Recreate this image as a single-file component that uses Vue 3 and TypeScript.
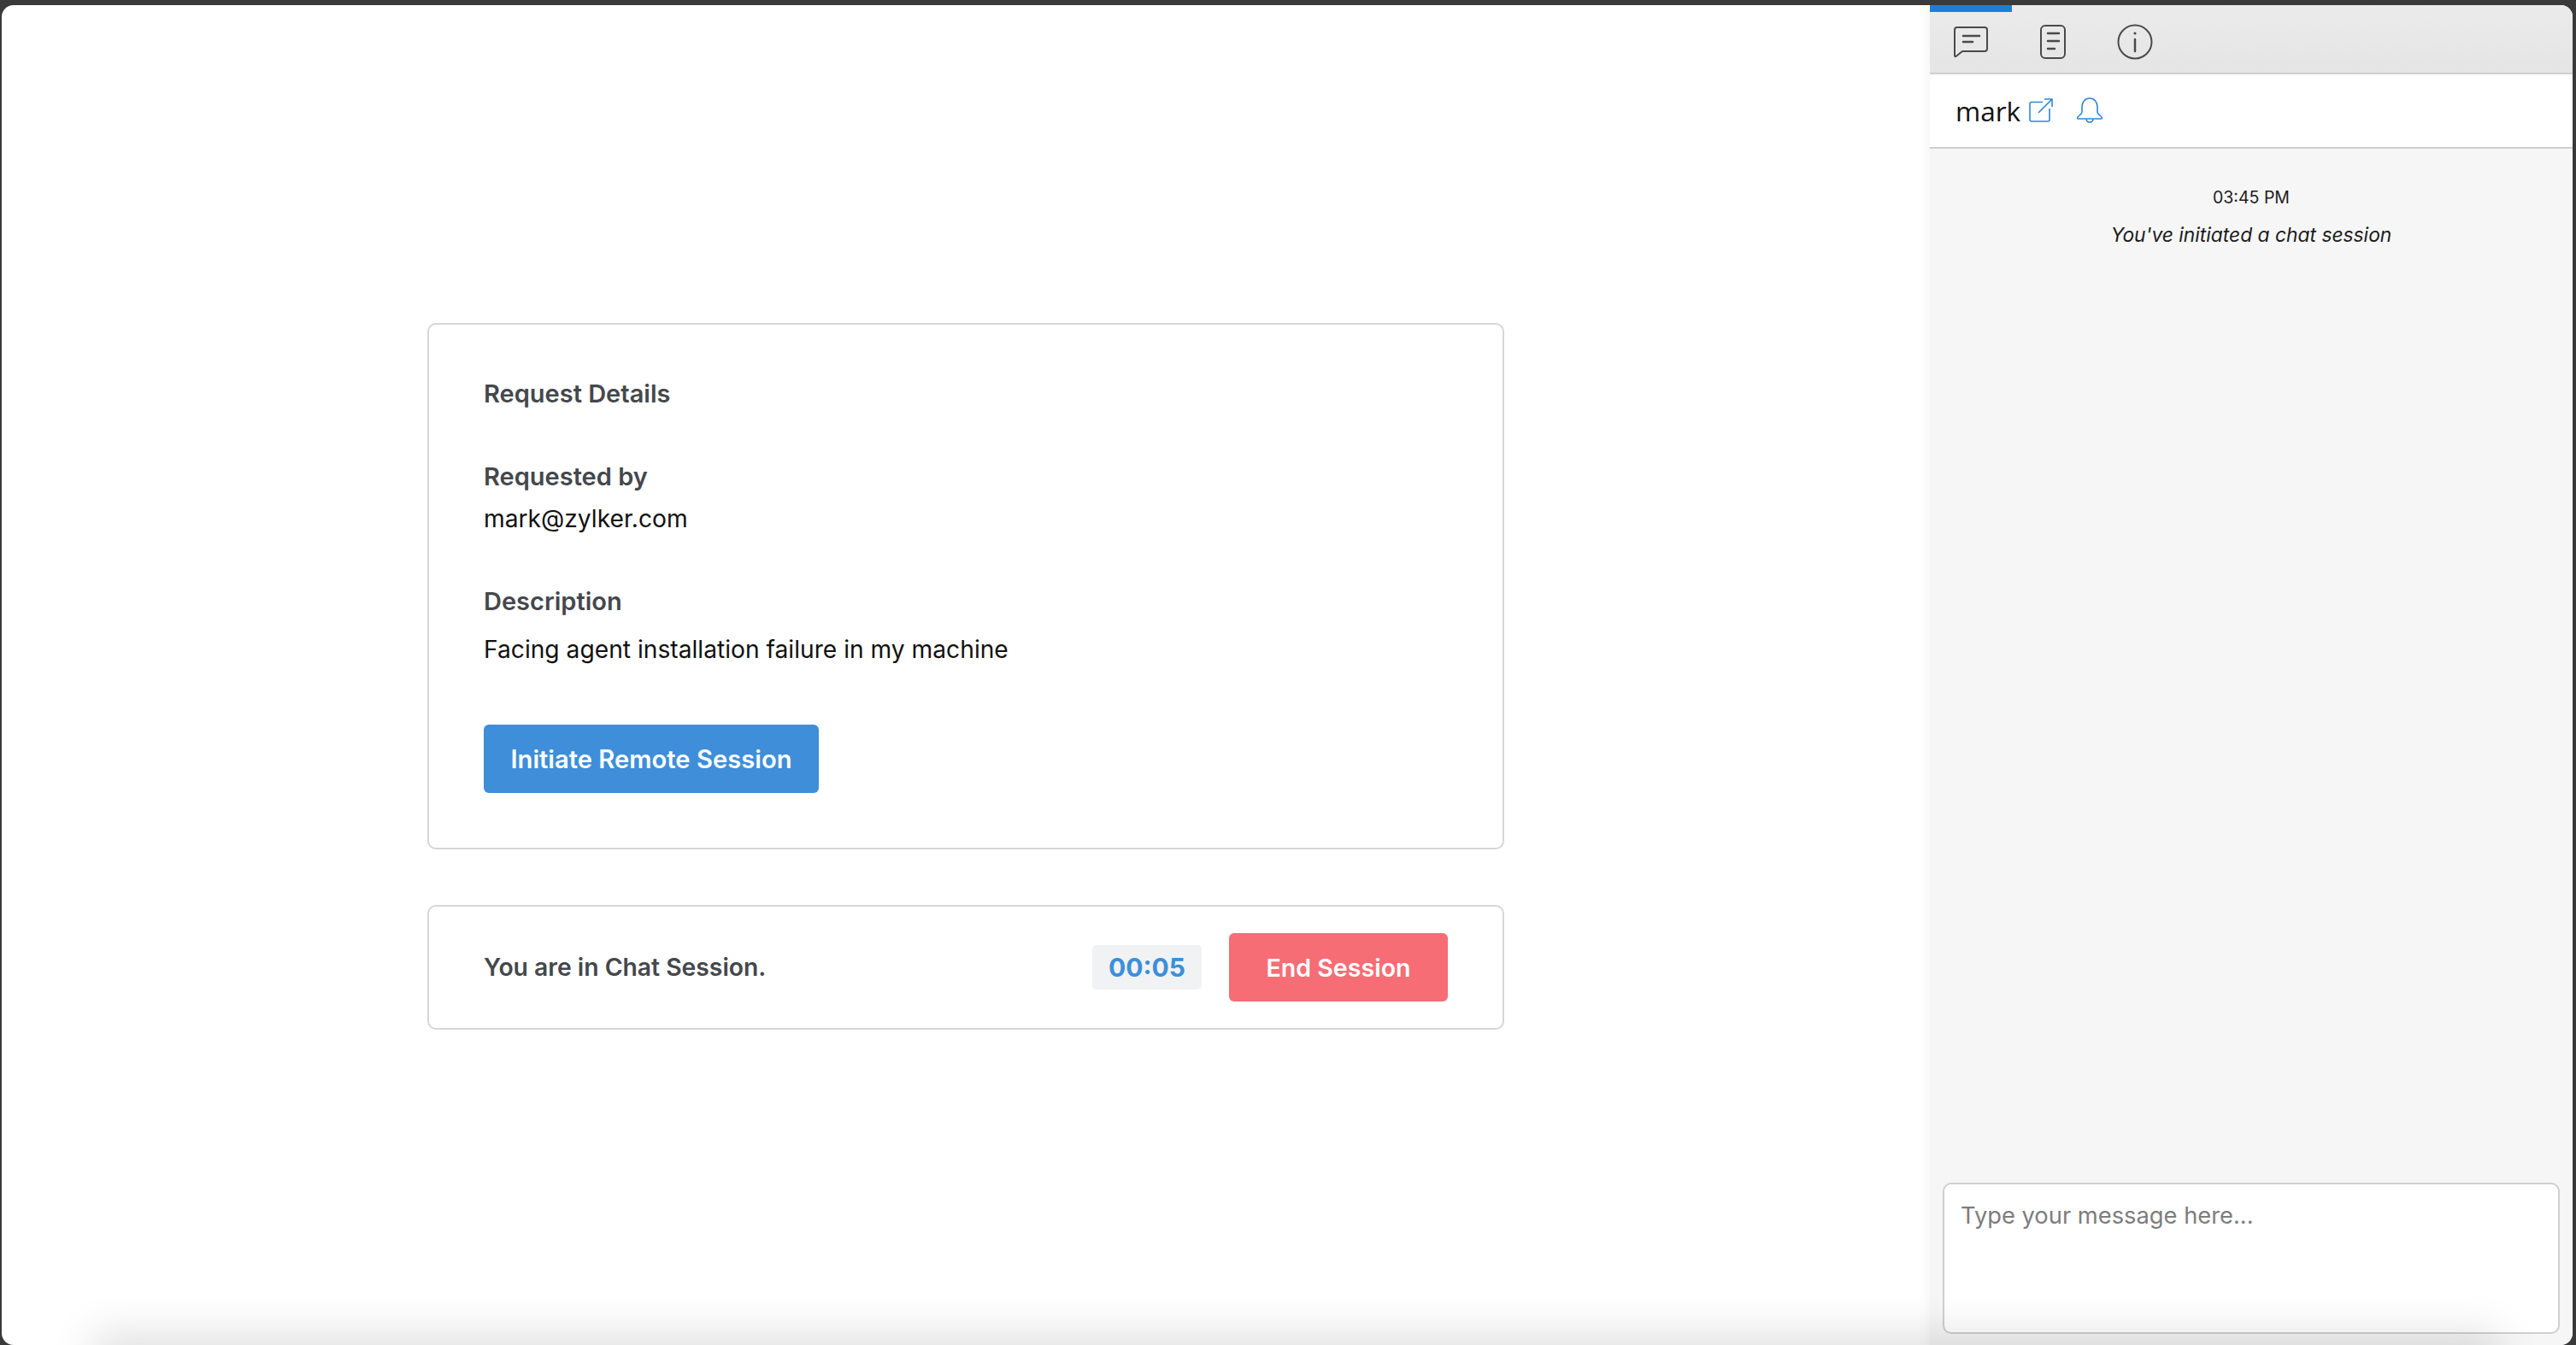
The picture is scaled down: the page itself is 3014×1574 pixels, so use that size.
<template>
  <div class="window">
    <main class="main">
      <section class="card details">
        <h2 class="title">Request Details</h2>
        <h3 class="label by-label">Requested by</h3>
        <p class="value email">mark@zylker.com</p>
        <h3 class="label desc-label">Description</h3>
        <p class="value desc">Facing agent installation failure in my machine</p>
        <button class="btn btn-blue">Initiate Remote Session</button>
      </section>

      <section class="card session">
        <span class="session-text">You are in Chat Session.</span>
        <span class="timer">{{ elapsed }}</span>
        <button class="btn btn-red">End Session</button>
      </section>
    </main>

    <aside class="side">
      <div class="tabs">
        <span class="tab-bar"></span>
        <svg class="ico-chat" width="40" height="38" viewBox="0 0 40 38" fill="none" stroke="#4a4a4a" stroke-width="2">
          <path d="M4 2h32a3 3 0 0 1 3 3v22a3 3 0 0 1-3 3H10l-7.500 6a1 1 0 0 1-1.500-1V5a3 3 0 0 1 3-3z" stroke-linejoin="round" />
          <path d="M11 12h19M11 19h11" stroke-width="2.500" stroke-linecap="round" />
        </svg>
        <svg class="ico-doc" width="30" height="40" viewBox="0 0 30 40" fill="none" stroke="#4a4a4a" stroke-width="2">
          <rect x="1" y="1" width="28" height="38" rx="5" />
          <path d="M9 10h13M9 19h13M9 28h8" stroke-width="2.500" stroke-linecap="round" />
        </svg>
        <svg class="ico-info" width="42" height="42" viewBox="0 0 42 42" fill="none" stroke="#4a4a4a" stroke-width="2">
          <circle cx="21" cy="21" r="19.500" />
          <path d="M21 18v14" stroke-width="2.500" stroke-linecap="round" />
          <circle cx="21" cy="11" r="1.600" fill="#4a4a4a" stroke="none" />
        </svg>
      </div>

      <div class="contact">
        <span class="contact-name">mark</span>
        <svg class="ico-ext" width="28" height="28" viewBox="0 0 28 28" fill="none" stroke="#2f86d8" stroke-width="1.600">
          <path d="M16 4.500H3a2 2 0 0 0-2 2V25a2 2 0 0 0 2 2h19a2 2 0 0 0 2-2V12" />
          <path d="M11 17L26.500 1.500M18 1h9v9" />
        </svg>
        <svg class="ico-bell" width="32" height="30" viewBox="0 0 32 30" fill="none" stroke="#2f86d8" stroke-width="1.600">
          <path d="M16 1c5.500 0 9 4.500 9 10v6c0 2 3 4 5 6 1 1 .5 2-1 2H3c-1.500 0-2-1-1-2 2-2 5-4 5-6v-6C7 5.500 10.500 1 16 1z" stroke-linejoin="round" />
          <path d="M12 25.500c.5 2.500 2 3.500 4 3.500s3.500-1 4-3.500" />
        </svg>
      </div>

      <div class="messages">
        <div class="msg-time">03:45 PM</div>
        <div class="msg-note">You've initiated a chat session</div>
      </div>

      <div class="composer">
        <textarea class="input" placeholder="Type your message here..."></textarea>
      </div>
    </aside>

    <div class="dock-shadow"></div>
  </div>
</template>

<script setup lang="ts">
import { ref } from 'vue';

const elapsed = ref('00:05');
</script>

<style>
html, body {
  margin: 0;
  height: 100%;
  background: #3a3a3a;
  overflow: hidden;
}
</style>

<style scoped>
.window {
  position: relative;
  display: flex;
  height: 1568px;
  margin: 6px 4px 0 2px;
  background: #fff;
  border-radius: 14px;
  overflow: hidden;
  font-family: Inter, "Liberation Sans", sans-serif;
}

/* left part */
.main {
  flex: 1;
  display: flex;
  flex-direction: column;
  align-items: center;
  justify-content: center;
  gap: 65px;
  padding-top: 3px;
}
.card {
  width: 1260px;
  box-sizing: border-box;
  border: 2px solid #d6d6d6;
  border-radius: 10px;
  padding: 64px;
  background: #fff;
}
.title, .label {
  margin: 0;
  font-size: 29px;
  line-height: 34px;
  font-weight: 600;
  color: #44484c;
}
.value {
  margin: 0;
  font-size: 28.200px;
  line-height: 34px;
  font-weight: 400;
  color: #111;
}
.by-label { margin-top: 63px; }
.email { margin-top: 15px; }
.desc-label { margin-top: 63px; }
.desc { margin-top: 22px; }

.btn {
  display: block;
  height: 80px;
  border: none;
  border-radius: 6px;
  color: #fff;
  font-family: inherit;
  font-weight: 600;
  cursor: pointer;
}
.btn-blue {
  width: 392px;
  margin-top: 71px;
  background: #3e8ed9;
  font-size: 29.200px;
}
.btn-red {
  width: 256px;
  background: #f66d75;
  font-size: 28.600px;
}

.session {
  display: flex;
  align-items: center;
  padding-top: 31px;
  padding-bottom: 31px;
}
.session-text {
  flex: 1;
  font-size: 28.300px;
  font-weight: 600;
  color: #44484c;
}
.timer {
  width: 128px;
  height: 52px;
  margin-right: 32px;
  display: flex;
  align-items: center;
  justify-content: center;
  background: #f1f2f4;
  border-radius: 5px;
  color: #3e8ed9;
  font-size: 30px;
  font-weight: 700;
}

/* chat side */
.side {
  width: 752px;
  display: flex;
  flex-direction: column;
  background: #f6f6f6;
  box-shadow: -4px 0 10px rgba(0, 0, 0, 0.04);
  z-index: 1;
}
.tabs {
  position: relative;
  height: 73px;
  padding-top: 6px;
  flex: none;
  display: flex;
  align-items: center;
  background: linear-gradient(#ebebeb, #e5e5e5);
  border-bottom: 2px solid #cfcfcf;
}
.tab-bar {
  position: absolute;
  left: 0;
  top: 0;
  width: 96px;
  height: 8px;
  background: #1b7fd6;
}
.ico-chat { margin-left: 28px; }
.ico-doc { margin-left: 61px; }
.ico-info { margin-left: 60px; }

.contact {
  height: 84px;
  padding-bottom: 1px;
  flex: none;
  display: flex;
  align-items: center;
  padding-left: 30px;
  background: #fff;
  border-bottom: 2px solid #cfcfcf;
}
.contact-name {
  font-family: "Open Sans", sans-serif;
  font-size: 31.500px;
  color: #111;
}
.ico-ext { margin-left: 10px; }
.ico-bell { margin-left: 27px; }

.messages {
  flex: 1;
  padding-top: 44px;
  text-align: center;
  color: #1c1c1c;
}
.msg-time {
  font-size: 19.500px;
  line-height: 26px;
}
.msg-note {
  margin-top: 16px;
  font-size: 22.800px;
  line-height: 30px;
  font-style: italic;
}

.composer {
  padding: 0 15px 13px;
}
.input {
  display: block;
  width: 100%;
  height: 177px;
  box-sizing: border-box;
  padding: 20px 19px;
  border: 2px solid #cfcfcf;
  border-radius: 10px;
  background: #fff;
  resize: none;
  font-family: inherit;
  font-size: 27.300px;
  line-height: 34px;
}
.input::placeholder {
  color: #7d7d7d;
  opacity: 1;
}

/* soft shadow from what sits under the window */
.dock-shadow {
  position: absolute;
  left: 120px;
  right: 100px;
  bottom: -40px;
  height: 40px;
  box-shadow: 0 0 50px 14px rgba(0, 0, 0, 0.12);
  pointer-events: none;
  z-index: 2;
}
</style>
